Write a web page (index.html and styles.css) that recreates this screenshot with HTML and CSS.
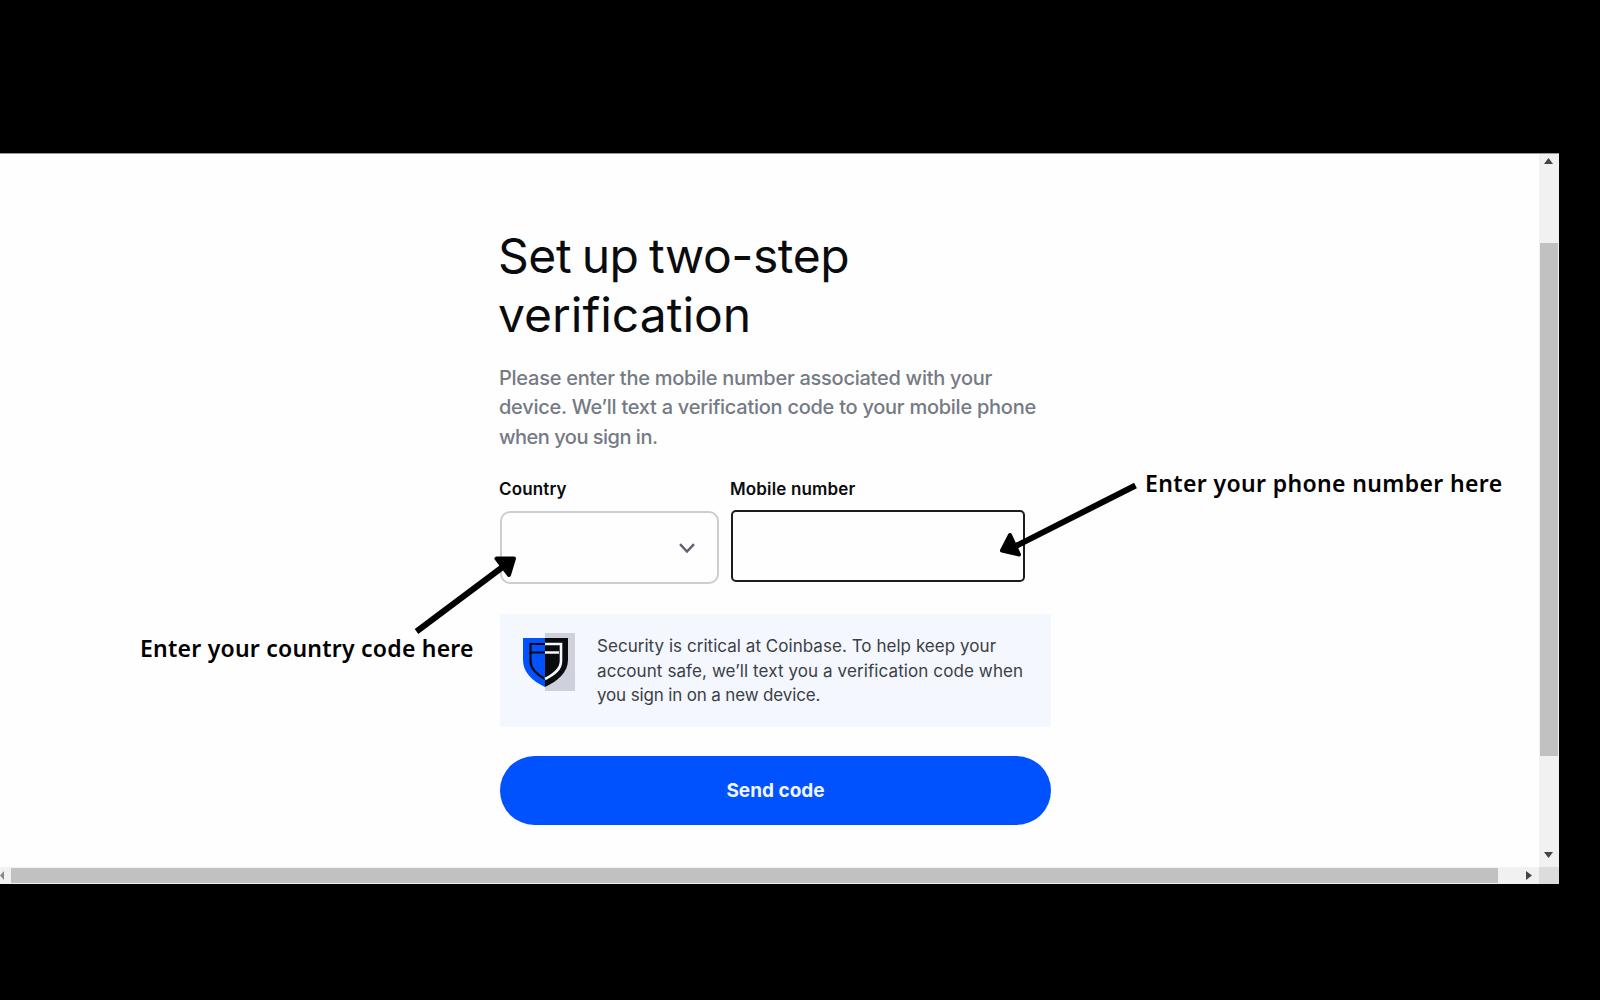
FILE: index.html
```
<!DOCTYPE html>
<html lang="en">

<head>
    <meta charset="UTF-8">
    <meta name="viewport" content="width=device-width, initial-scale=1.0">
    <title>Set up two-step verification</title>
    <link rel="stylesheet" href="styles.css">
</head>

<body>
    <div class="window">
        <main class="page">
            <div class="form">
                <h1 class="title"><span class="title-first">Set up two-step</span><br><span class="title-second">verification</span></h1>
                <p class="intro"><span class="intro-a">Please enter the mobile number associated with your</span><br><span class="intro-b">device. We’ll text a verification code to your mobile phone</span><br><span class="intro-c">when you sign in.</span></p>
                <div class="fields">
                    <div class="field country">
                        <div class="label">Country</div>
                        <div class="select">
                            <svg class="chevron" width="16" height="11" viewBox="0 0 16 11">
                                <path d="M1 1.200L8 8.500L15 1.200" fill="none" stroke="#5b616e" stroke-width="2.400" />
                            </svg>
                        </div>
                    </div>
                    <div class="field mobile">
                        <div class="label">Mobile number</div>
                        <div class="input"></div>
                    </div>
                </div>
                <div class="notice">
                    <svg class="shield" width="52" height="59" viewBox="0 0 52 59">
                        <rect x="22" y="0" width="30" height="58" fill="#ced1dc" />
                        <path d="M0 5H22V54C9 48 0 39 0 27Z" fill="#0052ff" />
                        <path d="M22 5H45V27C45 39 35 48 22 54Z" fill="#0a0b0d" />
                        <path d="M22 11H7.500V28C7.500 36 13 41 22 46M7.500 19.500H22" fill="none" stroke="#0a0b0d" stroke-width="2.2" />
                        <path d="M22 11H38V28C38 36 32 41 22 46M22 19.500H36" fill="none" stroke="#f4f7fe" stroke-width="2.6" />
                    </svg>
                    <p class="notice-text"><span class="notice-a">Security is critical at Coinbase. To help keep your</span><br><span class="notice-b">account safe, we’ll text you a verification code when</span><br><span class="notice-c">you sign in on a new device.</span></p>
                </div>
                <button class="send">Send code</button>
            </div>
        </main>
        <div class="scroll-y">
            <svg width="9" height="6" viewBox="0 0 9 6"><path d="M0 6L4.500 0L9 6Z" fill="#444" /></svg>
            <div class="thumb-y"></div>
            <svg class="arrow-down" width="9" height="6" viewBox="0 0 9 6"><path d="M0 0L4.500 6L9 0Z" fill="#444" /></svg>
        </div>
        <div class="scroll-x">
            <svg width="4" height="9" viewBox="0 0 4 9"><path d="M4 0L0 4.500L4 9Z" fill="#888" /></svg>
            <div class="thumb-x"></div>
            <svg width="6" height="9" viewBox="0 0 6 9"><path d="M0 0L6 4.500L0 9Z" fill="#444" /></svg>
        </div>
        <div class="corner"></div>
    </div>

    <!-- annotations over the page -->
    <div class="note note-country">Enter your country code here</div>
    <div class="note note-phone">Enter your phone number here</div>
    <svg class="arrows" width="1600" height="1000" viewBox="0 0 1600 1000">
        <g stroke="#000" stroke-width="6">
            <path d="M416.500 631.500L504 566" />
            <path d="M1135.500 485.500L1014 547" />
        </g>
        <g stroke="#000" stroke-width="4" stroke-linejoin="round">
            <path d="M496.500 558.500L514 558.500L509 575Z" />
            <path d="M1010 535L1002 550.500L1019 554.500Z" />
        </g>
    </svg>
</body>

</html>
```
FILE: styles.css
```
* {
    box-sizing: border-box;
}

body {
    margin: 0;
    height: 1000px;
    padding-top: 153px;
    background-color: #000;
    font-family: Inter, "Liberation Sans", sans-serif;
    overflow: hidden;
}

.window {
    display: grid;
    grid-template-columns: 1539px 20px;
    grid-template-rows: 713px 17px;
    width: 1559px;
    border-top: 1px solid #999;
    background-color: #fefefe;
}

.page {
    padding: 72px 0 0 500px;
}

.form {
    width: 551px;
}

.title {
    margin: 0 0 0 -2px;
    font-size: 48px;
    font-weight: 400;
    line-height: 59px;
    color: #0a0b0d;
    white-space: nowrap;
}

.title-first {
    letter-spacing: -0.45px;
    word-spacing: -2.5px;
}

.title-second {
    letter-spacing: 0;
}

.intro {
    margin: 20px 0 0 -1px;
    font-size: 20px;
    font-weight: 500;
    line-height: 29.4px;
    color: #757a84;
    white-space: nowrap;
}

.intro-a,
.intro-b {
    letter-spacing: -0.26px;
}

.intro-c {
    letter-spacing: -0.5px;
}

.fields {
    display: flex;
    gap: 12px;
    margin-top: 26px;
}

.country {
    width: 219px;
}

.mobile {
    width: 294px;
}

.label {
    height: 33px;
    margin-left: -1px;
    font-size: 17px;
    font-weight: 600;
    line-height: 22px;
    letter-spacing: 0.15px;
    color: #0a0b0d;
}

.select {
    display: flex;
    align-items: center;
    justify-content: flex-end;
    height: 73px;
    padding-right: 22px;
    border: 2px solid #cccdd0;
    border-radius: 10px;
}

.chevron {
    margin-top: 2px;
}

.input {
    height: 72px;
    margin-top: -1px;
    border: 2px solid #1b1c1f;
    border-radius: 5px;
}

.notice {
    display: flex;
    gap: 22px;
    height: 113px;
    margin-top: 30px;
    padding: 19px 0 0 23px;
    background-color: #f4f7fe;
}

.notice-text {
    margin: 1px 0 0;
    font-size: 17px;
    line-height: 24.5px;
    color: #3b3e45;
    white-space: nowrap;
}

.notice-a {
    letter-spacing: 0.04px;
}

.notice-b {
    letter-spacing: 0.1px;
}

.notice-c {
    letter-spacing: -0.15px;
}

.send {
    display: block;
    width: 551px;
    height: 69px;
    margin-top: 29px;
    border: none;
    border-radius: 35px;
    background-color: #0052ff;
    color: #f0f5ff;
    font-family: inherit;
    font-size: 19px;
    font-weight: 700;
}

.scroll-y {
    display: flex;
    flex-direction: column;
    align-items: center;
    padding: 4px 1px 9px 0;
    background-color: #f1f1f1;
}

.thumb-y {
    width: 18px;
    height: 513px;
    margin-top: 79px;
    background-color: #c1c1c1;
}

.arrow-down {
    margin-top: auto;
}

.scroll-x {
    display: flex;
    align-items: center;
    background-color: #f1f1f1;
}

.thumb-x {
    width: 1487px;
    height: 15px;
    margin: 0 28px 0 7px;
    background-color: #c1c1c1;
}

.corner {
    background-color: #dcdcdc;
}

.note {
    position: absolute;
    font-family: "Noto Sans", "Open Sans", sans-serif;
    font-size: 23px;
    font-weight: 600;
    line-height: 32px;
    color: #000;
    white-space: nowrap;
}

.note-country {
    left: 140px;
    top: 632px;
    letter-spacing: 0.23px;
}

.note-phone {
    left: 1145px;
    top: 467px;
    letter-spacing: 0.36px;
}

.arrows {
    position: absolute;
    left: 0;
    top: 0;
}
```
